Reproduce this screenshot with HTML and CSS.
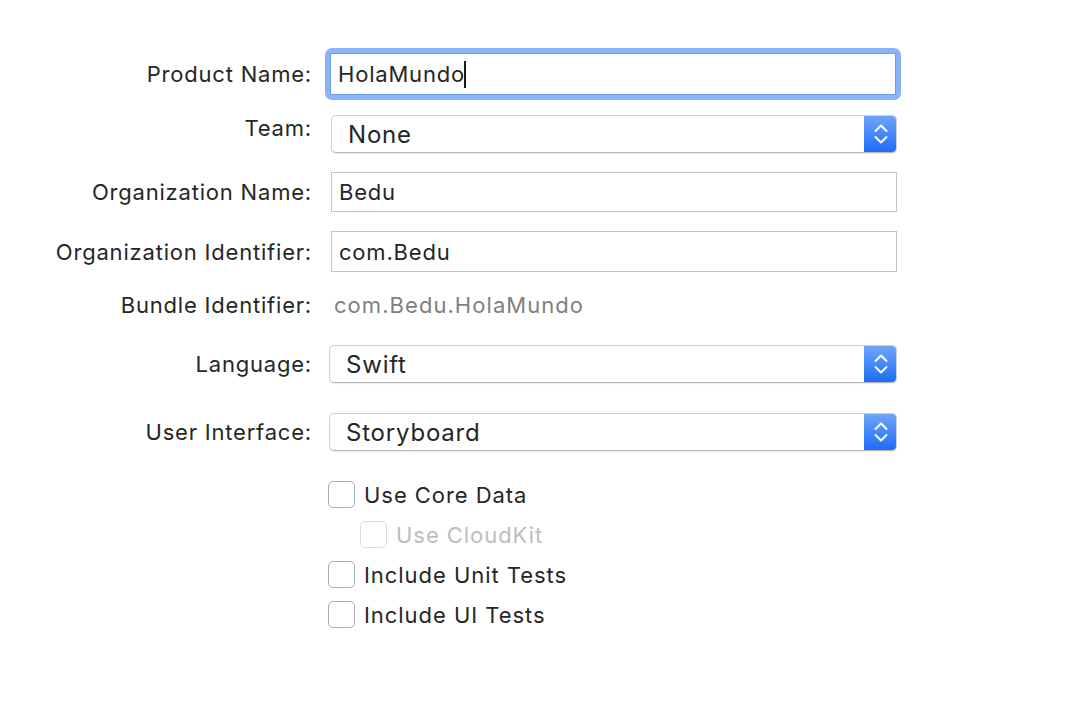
FILE: index.html
```html
<!DOCTYPE html>
<html>
<head>
<meta charset="utf-8">
<link rel="stylesheet" href="styles.css">
</head>
<body>
<div class="form">
  <div class="row r1">
    <div class="label">Product Name:</div>
    <div class="ring"><div class="field focus">HolaMundo<span class="caret"></span></div></div>
  </div>
  <div class="row r2">
    <div class="label up">Team:</div>
    <div class="popup team"><span class="pv">None</span><span class="stepper"><svg width="14" height="20" viewBox="0 0 14 20"><path d="M1.5 7 L7 1.5 L12.5 7 M1.5 13 L7 18.5 L12.5 13" fill="none" stroke="#fff" stroke-width="2" stroke-linecap="round" stroke-linejoin="round"/></svg></span></div>
  </div>
  <div class="row r3">
    <div class="label">Organization Name:</div>
    <div class="field h40">Bedu</div>
  </div>
  <div class="row r4">
    <div class="label">Organization Identifier:</div>
    <div class="field h41">com.Bedu</div>
  </div>
  <div class="row r5">
    <div class="label">Bundle Identifier:</div>
    <div class="static">com.Bedu.HolaMundo</div>
  </div>
  <div class="row r6">
    <div class="label">Language:</div>
    <div class="popup shift"><span class="pv">Swift</span><span class="stepper"><svg width="14" height="20" viewBox="0 0 14 20"><path d="M1.5 7 L7 1.5 L12.5 7 M1.5 13 L7 18.5 L12.5 13" fill="none" stroke="#fff" stroke-width="2" stroke-linecap="round" stroke-linejoin="round"/></svg></span></div>
  </div>
  <div class="row r7">
    <div class="label">User Interface:</div>
    <div class="popup shift"><span class="pv">Storyboard</span><span class="stepper"><svg width="14" height="20" viewBox="0 0 14 20"><path d="M1.5 7 L7 1.5 L12.5 7 M1.5 13 L7 18.5 L12.5 13" fill="none" stroke="#fff" stroke-width="2" stroke-linecap="round" stroke-linejoin="round"/></svg></span></div>
  </div>
  <div class="check c1"><span class="box"></span><span class="ct">Use Core Data</span></div>
  <div class="check c2 disabled"><span class="box"></span><span class="ct">Use CloudKit</span></div>
  <div class="check c3"><span class="box"></span><span class="ct">Include Unit Tests</span></div>
  <div class="check c4"><span class="box"></span><span class="ct">Include UI Tests</span></div>
</div>
</body>
</html>
```
FILE: styles.css
```css
html, body {
  margin: 0;
  padding: 0;
  background: #fff;
}
body {
  font-family: Inter, "Liberation Sans", sans-serif;
  color: #262626;
  width: 1070px;
  height: 704px;
  overflow: hidden;
}
.form {
  padding-top: 53px;
}
.row {
  display: flex;
  align-items: center;
}
.label {
  width: 312px;
  flex: none;
  text-align: right;
  font-size: 22px;
  letter-spacing: 0.8px;
}
.label.up {
  position: relative;
  top: -6px;
}
.r1 { height: 42px; }
.r2 { height: 38px; margin-top: 20px; }
.r3 { height: 40px; margin-top: 19px; }
.r4 { height: 41px; margin-top: 19px; }
.r5 { height: 30px; margin-top: 18px; }
.r6 { height: 38px; margin-top: 25px; }
.r7 { height: 38px; margin-top: 30px; }

.ring {
  margin-left: 13px;
  padding: 5px;
  border-radius: 7px;
  background: #8ab4f8;
}
.field {
  box-sizing: border-box;
  width: 566px;
  height: 40px;
  margin-left: 19px;
  border: 1px solid #c4c4c4;
  background: #fff;
  font-size: 22px;
  letter-spacing: 0.8px;
  padding-left: 7px;
  display: flex;
  align-items: center;
}
.field.focus {
  margin-left: 0;
  height: 42px;
  border: 1px solid #6f9be3;
}
.field.h41 { height: 41px; }
.caret {
  display: inline-block;
  width: 2px;
  height: 27px;
  background: #1a1a1a;
  margin-left: -1px;
}
.popup {
  box-sizing: border-box;
  width: 566px;
  height: 38px;
  margin-left: 19px;
  border: 1px solid #cfcfcf;
  border-bottom-color: #b5b5b5;
  border-radius: 5px;
  background: #fff;
  display: flex;
  align-items: center;
  box-shadow: 0 1px 1px rgba(0,0,0,0.08);
  overflow: hidden;
}
.popup.shift {
  margin-left: 17px;
  width: 568px;
}
.pv {
  flex: 1;
  font-size: 24px;
  letter-spacing: 0.8px;
  padding-left: 16px;
}
.stepper {
  width: 33px;
  height: 38px;
  margin-right: -1px;
  margin-top: -1px;
  margin-bottom: -1px;
  background: linear-gradient(#70a6f9, #1a6cf7);
  display: flex;
  align-items: center;
  justify-content: center;
  flex: none;
}
.static {
  margin-left: 22px;
  font-size: 22px;
  letter-spacing: 1.05px;
  color: #808080;
}
.check {
  display: flex;
  align-items: center;
  height: 27px;
  margin-left: 328px;
  margin-top: 13px;
}
.check.c1 { margin-top: 30px; }
.check.c2 { margin-left: 360px; }
.box {
  box-sizing: border-box;
  width: 27px;
  height: 27px;
  border: 1px solid #ababab;
  border-radius: 5px;
  background: #fff;
  flex: none;
}
.ct {
  margin-left: 9px;
  font-size: 22px;
  letter-spacing: 0.95px;
}
.disabled .box { border-color: #dddddd; }
.disabled .ct { color: #bdbdbd; }
```
